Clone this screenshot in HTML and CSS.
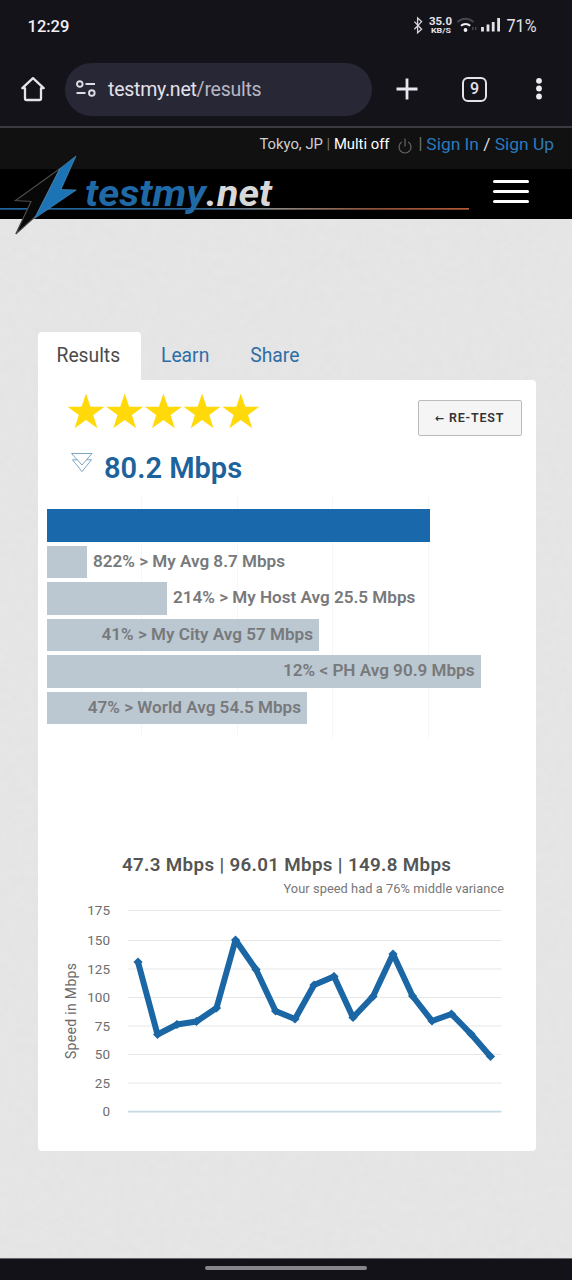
FILE: index.html
```html
<!DOCTYPE html>
<html lang="en">
<head>
<meta charset="utf-8">
<title>testmy.net results</title>
<link rel="stylesheet" href="styles.css">
</head>
<body>
<div class="screen">
  <header class="chrome">
    <div class="status">
      <span class="clock">12:29</span>
      <svg class="status-icons" width="130" height="24" viewBox="412 14 130 24">
        <path d="M414.4 21.6l7.2 7.6-4 3.6V18l4 3.6-7.2 7.6" fill="none" stroke="#d5d4da" stroke-width="1.3"/>
        <text x="429" y="25.400" font-size="10" font-weight="700" textLength="23" lengthAdjust="spacingAndGlyphs">35.0</text>
        <text x="431" y="33.400" font-size="8" font-weight="700" textLength="20" lengthAdjust="spacingAndGlyphs">KB/S</text>
        <g fill="none" stroke-width="1.9">
          <path d="M457.5 22a11.5 11.5 0 0 1 16 0" stroke="#47464d"/>
          <path d="M461 25.8a6.8 6.8 0 0 1 9.200 0" stroke="#f0eff4"/>
        </g>
        <circle cx="465.500" cy="30" r="1.900" fill="#f0eff4"/>
        <path d="M472 28.500h1.500M475 28.500h1.500" stroke="#47464d" stroke-width="3"/>
        <path d="M482.500 31.500V27M488 31.500V24.500M493.200 31.500V22M498.600 31.500V18" stroke="#e4e3e8" stroke-width="2.800" fill="none"/>
        <text x="506.500" y="32" font-size="17.500" textLength="30" lengthAdjust="spacingAndGlyphs">71%</text>
      </svg>
    </div>
    <div class="toolbar">
      <svg class="home" width="28" height="28" viewBox="0 0 28 28"><path d="M14 3.200L3.300 13.200H6v10.300q0 1.500 1.500 1.500h13q1.500 0 1.500-1.500V13.200h2.700z" fill="none" stroke="#e5e2eb" stroke-width="2.300" stroke-linejoin="round"/></svg>
      <div class="omnibox">
        <svg width="22" height="20" viewBox="0 0 22 20" fill="none" stroke="#dedce6" stroke-width="1.900"><circle cx="3.800" cy="5" r="2.800"/><path d="M9.500 5H19M.5 14H9.500"/><circle cx="15.800" cy="14" r="2.800"/></svg>
        <span class="url">testmy.net<span class="path">/results</span></span>
      </div>
      <svg class="plus" width="24" height="24" viewBox="0 0 24 24"><path d="M12 1.500v21M1.500 12h21" stroke="#e9e6ef" stroke-width="2.800"/></svg>
      <div class="tabs-count">9</div>
      <svg class="dots" width="8" height="26" viewBox="0 0 8 26" fill="#eeebf3"><circle cx="4" cy="4.800" r="2.900"/><circle cx="4" cy="12.500" r="2.900"/><circle cx="4" cy="20.500" r="2.900"/></svg>
    </div>
  </header>

  <div class="account">
    <span class="loc">Tokyo, JP <i>|</i> <b>Multi off</b></span>
    <svg class="power" width="16" height="18" viewBox="0 0 16 18" fill="none" stroke="#666" stroke-width="1.200"><path d="M4.800 4.900a6 6 0 1 0 6.400 0M8 1.500v8"/></svg>
    <span class="sep">|</span>
    <span class="sign"><a>Sign In</a> / <a>Sign Up</a></span>
  </div>

  <nav class="brandbar">
    <svg class="logo" width="480" height="90" viewBox="0 150 480 90">
      <defs><linearGradient id="rule" gradientUnits="userSpaceOnUse" x1="0" x2="470" y1="0" y2="0"><stop offset="0" stop-color="#1f659e"/><stop offset=".42" stop-color="#2c6593"/><stop offset=".58" stop-color="#8b8885"/><stop offset=".8" stop-color="#8e5138"/><stop offset="1" stop-color="#b55a36"/></linearGradient></defs>
      <rect x="0" y="208" width="469" height="1.700" fill="url(#rule)"/>
      <path d="M60 168.500L15.500 200.500 31 201.500 15.800 234 36 216z" fill="#080808" stroke="#4a4a4a" stroke-width="1.200"/>
      <path d="M76 156L60 168.500 34.500 218.500 76.300 190 61 189.500z" fill="#1d74b5" stroke="#4f93c3" stroke-width=".6"/>
      <text class="wordmark" x="85" y="206" fill="#2069a7" textLength="121" lengthAdjust="spacingAndGlyphs">testmy</text>
      <text class="wordmark" x="206" y="206" fill="#d8d8d8" textLength="66" lengthAdjust="spacingAndGlyphs">.net</text>
    </svg>
    <div class="burger"><span></span><span></span><span></span></div>
  </nav>

  <main class="page">
    <svg class="texture" width="572" height="1039"><filter id="paper" x="0" y="0" width="100%" height="100%"><feTurbulence type="fractalNoise" baseFrequency=".12" numOctaves="3" seed="4"/><feColorMatrix values="0 0 0 0 1  0 0 0 0 1  0 0 0 0 1  .9 0 0 0 -.3"/></filter><rect width="572" height="1039" filter="url(#paper)"/></svg>
    <div class="tabs"><span class="tab active">Results</span><span class="tab">Learn</span><span class="tab share">Share</span></div>
    <section class="card">
      <div class="summary">
        <div>
          <svg class="stars" width="192" height="36" viewBox="0 0 192 36" fill="#ffd90a">
            <defs><path id="star" d="M18-.5L22.500 12.800H36.500L25.200 20.900 29.400 34.300 18 26.100 6.600 34.300 10.800 20.900-.5 12.800H13.500z"/></defs>
            <use href="#star"/><use href="#star" x="38.700"/><use href="#star" x="77.400"/><use href="#star" x="116.100"/><use href="#star" x="154.800"/>
          </svg>
          <div class="speed">
            <svg width="24" height="22" viewBox="0 0 24 22" fill="none" stroke="#6e9dbd" stroke-width=".9"><path d="M1.500 1.500H22L12 13zM7.500 7.800H2.500L12 19.500 21.500 7.800H16.500"/></svg>
            <span>80.2 Mbps</span>
          </div>
        </div>
        <button class="retest"><span class="arrow">←</span> RE-TEST</button>
      </div>

      <div class="bars">
        <div class="bar main" style="width:382.500px"></div>
        <div class="row"><div class="bar" style="width:40px"></div><span>822% &gt; My Avg 8.7 Mbps</span></div>
        <div class="row"><div class="bar" style="width:120px"></div><span>214% &gt; My Host Avg 25.5 Mbps</span></div>
        <div class="bar in" style="width:272px"><span>41% &gt; My City Avg 57 Mbps</span></div>
        <div class="bar in" style="width:433.500px"><span>12% &lt; PH Avg 90.9 Mbps</span></div>
        <div class="bar in" style="width:260px"><span>47% &gt; World Avg 54.5 Mbps</span></div>
      </div>

      <svg class="chart" width="498" height="300" viewBox="38 840 498 300">
        <text x="122" y="871" class="stats" textLength="329">47.3 Mbps | 96.01 Mbps | 149.8 Mbps</text>
        <text x="283.500" y="893" class="note" textLength="220.500">Your speed had a 76% middle variance</text>
        <g class="grid"><path d="M128 910.500H501.500M128 940.500H501.500M128 969H501.500M128 997.500H501.500M128 1026H501.500M128 1054.500H501.500M128 1083H501.500"/></g>
        <path d="M128 1111.700H501.500" stroke="#c6d9e3" stroke-width="1.700"/>
        <g class="ticks"><text x="110" y="915">175</text><text x="110" y="945">150</text><text x="110" y="974">125</text><text x="110" y="1002">100</text><text x="110" y="1031">75</text><text x="110" y="1059">50</text><text x="110" y="1088">25</text><text x="110" y="1116">0</text></g>
        <text class="axis" transform="translate(75.500 1059) rotate(-90)" textLength="96">Speed in Mbps</text>
        <defs><marker id="pt" markerUnits="userSpaceOnUse" markerWidth="10" markerHeight="10" refX="5" refY="5"><path d="M5 .4L9.600 5 5 9.600 .4 5z" fill="#1b66a4"/></marker></defs>
        <polyline points="138,962 157.500,1034.500 177,1024.500 196.500,1021.500 216.500,1008 235.500,940 256,969.500 275.500,1011 295,1019 314,985 334,976.500 353,1017.500 373,996.500 393,954 412.500,996 432,1021 451.500,1014 471,1034 490.500,1056.500" fill="none" stroke="#1b66a4" stroke-width="6" stroke-linejoin="bevel" marker-start="url(#pt)" marker-mid="url(#pt)" marker-end="url(#pt)"/>
      </svg>
    </section>
  </main>
  <footer class="gesture"><span></span></footer>
</div>
</body>
</html>
```
FILE: styles.css
```css
* { box-sizing: border-box; }
body { margin: 0; font-family: Roboto, "Liberation Sans", sans-serif; }
.screen { width: 572px; height: 1280px; display: flex; flex-direction: column; overflow: hidden; background: #e5e5e5; }

.chrome { height: 128px; flex: none; background: #14131a; border-bottom: 2px solid #3b3a40; }
.status { height: 52px; display: flex; justify-content: space-between; align-items: center; padding: 0 30px 0 27.5px; }
.clock { color: #f1f0f5; font-size: 16.5px; font-weight: 500; }
.status-icons { fill: #e4e3e8; }
.toolbar { height: 74px; display: flex; align-items: center; padding-left: 19px; }
.omnibox { width: 307px; height: 53px; margin-left: 18px; padding-left: 11px; border-radius: 27px; background: #282735; display: flex; align-items: center; }
.url { margin-left: 10px; font-size: 19.5px; color: #e3e1ea; letter-spacing: -.25px; }
.path { color: #b9b7c3; }
.plus { margin-left: 23px; }
.tabs-count { width: 25px; height: 25px; margin-left: 43px; border: 2.5px solid #e5e2eb; border-radius: 6px; color: #e5e2eb; font-size: 16px; font-weight: 500; line-height: 20px; text-align: center; }
.dots { margin-left: 48px; }

.account { height: 41px; flex: none; background: #111; display: flex; align-items: flex-start; justify-content: flex-end; padding: 3px 18px 0 0; line-height: 26px; color: #ddd; }
.loc { font-size: 14.8px; line-height: 27px; color: #cfcfcf; white-space: nowrap; }
.loc i { font-style: normal; color: #777; }
.loc b { font-weight: 400; color: #fff; }
.power { margin: 6px 5px 0 8px; }
.sep { color: #777; font-size: 16px; margin-right: 4px; }
.sign { font-size: 17.4px; line-height: 26px; white-space: nowrap; }
.sign a { color: #2b7abd; }

.brandbar { height: 50px; flex: none; background: #000; display: flex; justify-content: space-between; position: relative; z-index: 1; padding-right: 43px; }
.logo { margin-top: -19px; flex: none; }
.wordmark { font: italic 700 36px Roboto, "Open Sans", sans-serif; }
.burger { width: 36px; margin-top: 11px; display: flex; flex-direction: column; gap: 7px; }
.burger span { height: 3px; border-radius: 1.5px; background: #fff; }

.page { height: 1039px; flex: none; position: relative; padding: 113px 36.5px 0 37.500px; background: #e4e4e4; }
.texture { position: absolute; left: 0; top: 0; opacity: .2; }
.tabs { position: relative; display: flex; height: 48px; font-size: 19.3px; line-height: 48px; color: #2d6ea6; }
.tab { padding: 0 20.5px; }
.tab.active { width: 103px; padding: 0 0 0 19px; background: #fff; color: #4b4b4b; border-radius: 4px 4px 0 0; }
.card { position: relative; height: 771px; background: #fff; border-radius: 0 4px 4px 4px; }
.summary { height: 117px; display: flex; justify-content: space-between; padding: 14px 14px 0 30.5px; }
.stars { display: block; overflow: visible; }
.speed { display: flex; align-items: flex-start; margin-top: 20px; padding-left: 2px; gap: 10px; font-size: 29px; line-height: 36px; font-weight: 600; color: #1d639b; }
.speed svg { margin-top: 2px; }
.retest { width: 104px; height: 36px; margin-top: 6px; padding: 0 0 2px; border: 1px solid #bbb; border-radius: 2px; background: #f5f5f5; font: 600 12.5px Roboto, sans-serif; letter-spacing: .8px; color: #333; }
.arrow { font: 700 11px "DejaVu Sans", sans-serif; letter-spacing: 1px; }
.bars { height: 241px; margin-left: 9.5px; padding-top: 12px; display: flex; flex-direction: column; gap: 4px; background: repeating-linear-gradient(90deg, transparent 0 94.5px, #f6f6f6 94.5px 95.500px); }
.bar { height: 32.500px; flex: none; background: #bbc7d1; }
.bar.main { background: #1868ab; }
.row { display: flex; gap: 6px; }
.row, .in { color: #77797b; font-size: 17.1px; font-weight: 600; line-height: 31px; white-space: nowrap; }
.in { text-align: right; padding-right: 6px; }
.chart { display: block; margin: 102px 0 0 .5px; }
.stats { font-size: 18.8px; font-weight: 600; fill: #555; }
.note { font-size: 12.8px; fill: #777; }
.grid { stroke: #e7e7e7; stroke-width: 1.200; }
.ticks { font-size: 13.500px; text-anchor: end; fill: #6e6e6e; }
.axis { font-size: 14px; fill: #6a6a6a; }

.gesture { flex: none; height: 22px; background: #131219; border-top: 1px solid #66656c; display: flex; justify-content: center; padding-top: 7px; }
.gesture span { width: 162px; height: 4px; border-radius: 2px; background: #87858c; }
```
